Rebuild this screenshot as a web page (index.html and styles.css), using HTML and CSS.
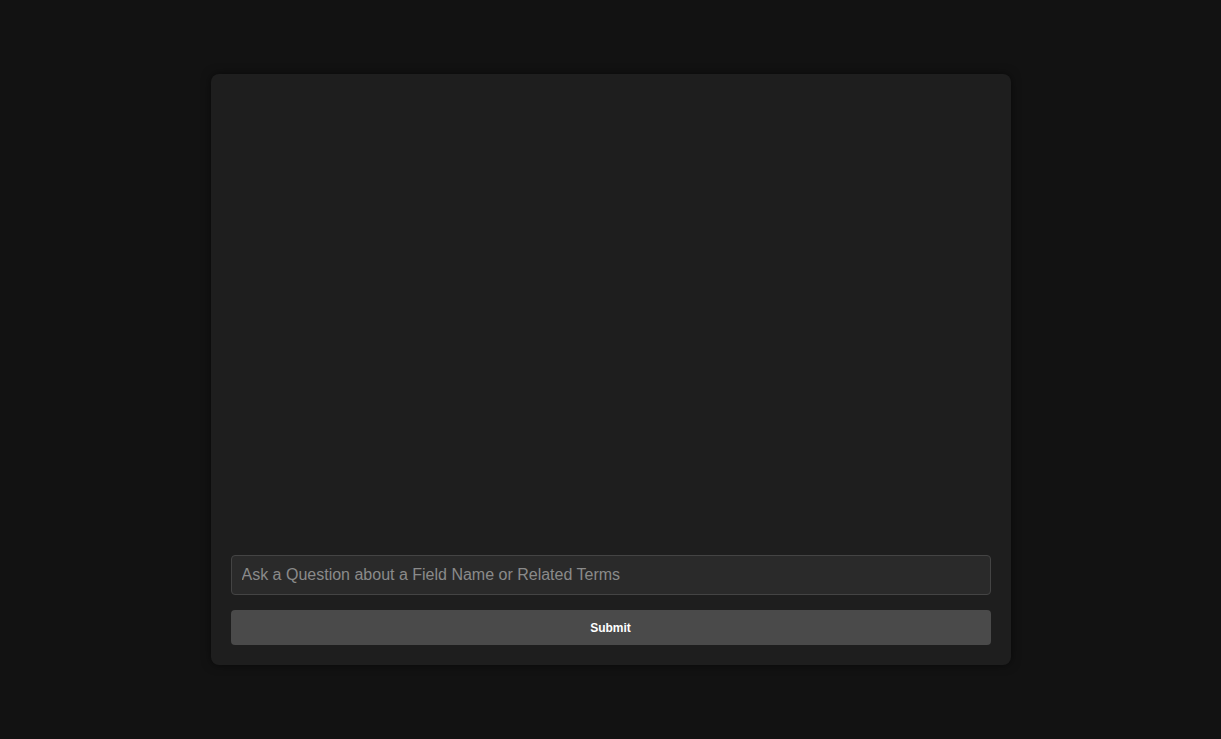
FILE: index.html
```html
<!DOCTYPE html>
<html lang="en">
<head>
<meta charset="utf-8">
<title>Chat</title>
<link rel="stylesheet" href="styles.css">
</head>
<body>
<main class="chat-card">
  <div class="messages"></div>
  <input class="question-input" type="text" placeholder="Ask a Question about a Field Name or Related Terms">
  <button class="submit-btn" type="button">Submit</button>
</main>
</body>
</html>
```

FILE: styles.css
```css
html, body {
  margin: 0;
  padding: 0;
  height: 100%;
}
body {
  background: #121212;
  font-family: "Liberation Sans", Arial, sans-serif;
  display: flex;
  align-items: center;
  justify-content: center;
}
.chat-card {
  box-sizing: border-box;
  width: 800px;
  height: 80vh;
  background: #1e1e1e;
  border-radius: 8px;
  padding: 20px;
  display: flex;
  flex-direction: column;
  box-shadow: 0 0 10px rgba(0, 0, 0, 0.5);
}
.messages {
  flex: 1;
  overflow-y: auto;
}
.question-input {
  box-sizing: border-box;
  width: 100%;
  height: 40px;
  padding: 10px;
  background: #2a2a2a;
  border: 1px solid #444;
  border-radius: 4px;
  color: #e0e0e0;
  font-family: "Liberation Sans", Arial, sans-serif;
  font-size: 16px;
  outline: none;
}
.question-input::placeholder {
  color: #8a8a8a;
}
.submit-btn {
  box-sizing: border-box;
  margin-top: 15px;
  width: 100%;
  height: 35px;
  background: #4a4a4a;
  border: none;
  border-radius: 4px;
  color: #ffffff;
  font-family: "Liberation Sans", Arial, sans-serif;
  font-size: 12px;
  font-weight: bold;
  cursor: pointer;
}
```
